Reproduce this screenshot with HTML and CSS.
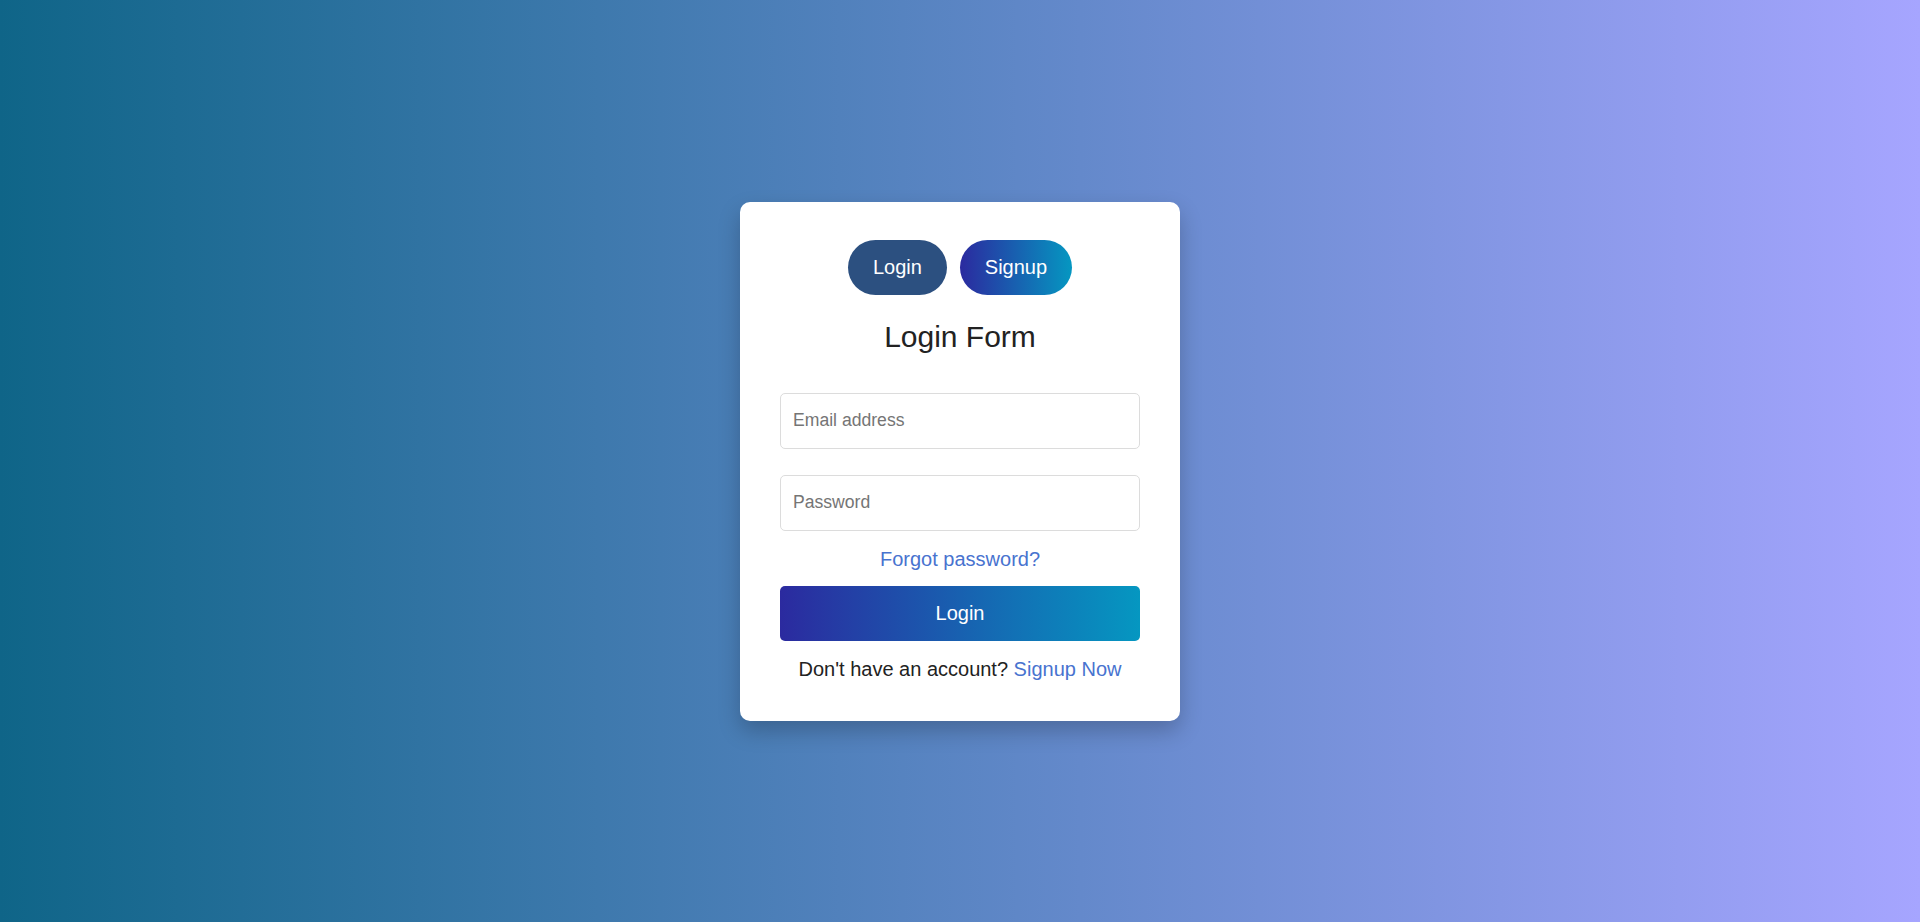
FILE: index.html
```html
<!DOCTYPE html>
<html lang="en">
<head>
<meta charset="utf-8">
<title>Login Form</title>
<link rel="stylesheet" href="styles.css">
</head>
<body>
<main class="page">
  <section class="card">
    <div class="tabs">
      <button class="tab tab-login" type="button">Login</button>
      <button class="tab tab-signup" type="button">Signup</button>
    </div>
    <h1 class="title">Login Form</h1>
    <form class="form">
      <input class="field" type="email" placeholder="Email address">
      <input class="field field-pass" type="password" placeholder="Password">
      <a class="forgot" href="#">Forgot password?</a>
      <button class="submit" type="button">Login</button>
      <p class="switch">Don't have an account? <a class="link" href="#">Signup Now</a></p>
    </form>
  </section>
</main>
</body>
</html>
```
FILE: styles.css
```css
* { box-sizing: border-box; }
html, body { margin: 0; padding: 0; height: 100%; }
body {
  font-family: "Liberation Sans", Arial, sans-serif;
  background: linear-gradient(to right, #0f6588, #a6a5ff);
  color: #222;
}
.page {
  height: 100%;
  display: flex;
  align-items: center;
  justify-content: center;
}
.card {
  width: 440px;
  background: #fff;
  border-radius: 10px;
  padding: 38px 40px 40px;
  box-shadow: 0 10px 22px rgba(0, 0, 0, 0.22);
}
.tabs {
  display: flex;
  justify-content: center;
  gap: 13px;
}
.tab {
  font-family: inherit;
  font-size: 20px;
  color: #fff;
  border: none;
  border-radius: 28px;
  height: 55px;
  padding: 0 25px;
  cursor: pointer;
}
.tab-login { background: #2c5080; }
.tab-signup { background: linear-gradient(to right, #2b2a9f, #0597c1); }
.title {
  margin: 25px 0 0;
  text-align: center;
  font-size: 30px;
  font-weight: 400;
  line-height: 34px;
  color: #222;
}
.form {
  display: flex;
  flex-direction: column;
  margin-top: 39px;
}
.field {
  height: 56px;
  border: 1px solid #dcdcdc;
  border-radius: 5px;
  padding: 0 12px;
  font-family: inherit;
  font-size: 17.6px;
  color: #333;
  outline: none;
}
.field::placeholder { color: #757575; }
.field-pass { margin-top: 26px; }
.forgot {
  margin-top: 17px;
  text-align: center;
  font-size: 20px;
  line-height: 23px;
  color: #4873cf;
  text-decoration: none;
}
.submit {
  margin-top: 15px;
  height: 55px;
  border: none;
  border-radius: 5px;
  font-family: inherit;
  font-size: 20px;
  color: #fff;
  background: linear-gradient(to right, #2b2a9f, #0597c1);
  cursor: pointer;
}
.switch {
  margin: 17px 0 0;
  text-align: center;
  font-size: 20px;
  line-height: 23px;
  color: #222;
}
.link { color: #4873cf; text-decoration: none; }
```
